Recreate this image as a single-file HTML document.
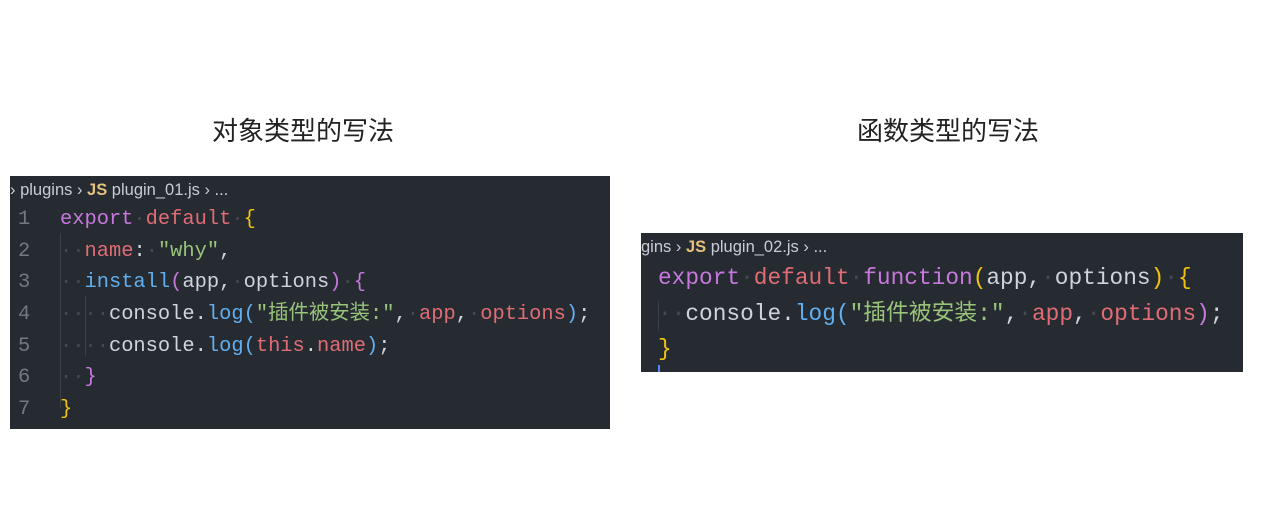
<!DOCTYPE html>
<html><head><meta charset="utf-8"><style>
body{margin:0;width:1287px;height:532px;background:#fff;position:relative;overflow:hidden;font-family:"Liberation Sans","Noto Sans CJK SC",sans-serif}
.t{position:absolute;top:113px;font-size:26px;color:#222;width:400px;text-align:center;line-height:36px}
.p{position:absolute;background:#262a31;overflow:hidden}
.bc{position:absolute;font-size:16.5px;color:#c8ccd4;white-space:nowrap;line-height:20px}
.bc b{color:#e5c07b;font-weight:bold}
.ln{position:absolute;font-family:"Liberation Mono","Noto Sans CJK SC",monospace;white-space:pre;color:#cfd3dc;line-height:1}
.ln span{line-height:1}
.n{position:absolute;color:#737884;font-family:"Liberation Mono",monospace;line-height:1}
.k{color:#c678dd}.r{color:#e06c75}.y{color:#f1c40f}.b{color:#61afef}.g{color:#98c379}.m{color:#c678dd}.d{color:#454a53}
</style></head><body>
<div class="t" style="left:103px">对象类型的写法</div>
<div class="t" style="left:748px">函数类型的写法</div>

<div class="p" style="left:10px;top:176px;width:600px;height:253px">
<div class="bc" style="left:0;top:4px">› plugins › <b>JS</b> plugin_01.js › ...</div>
<div style="position:absolute;left:50px;top:57px;width:1px;height:175px;background:#3b4048"></div>
<div style="position:absolute;left:75px;top:120px;width:1px;height:60px;background:#3b4048"></div>
<div style="font-size:20.4px">
<div class="n" style="left:8px;top:34px">1</div>
<div class="n" style="left:8px;top:66px">2</div>
<div class="n" style="left:8px;top:97px">3</div>
<div class="n" style="left:8px;top:129px">4</div>
<div class="n" style="left:8px;top:161px">5</div>
<div class="n" style="left:8px;top:192px">6</div>
<div class="n" style="left:8px;top:224px">7</div>
<div class="ln" style="left:50px;top:34px"><span class="k">export</span><span class="d">·</span><span class="r">default</span><span class="d">·</span><span class="y">{</span></div>
<div class="ln" style="left:50px;top:66px"><span class="d">··</span><span class="r">name</span>:<span class="d">·</span><span class="g">"why"</span>,</div>
<div class="ln" style="left:50px;top:97px"><span class="d">··</span><span class="b">install</span><span class="m">(</span>app,<span class="d">·</span>options<span class="m">)</span><span class="d">·</span><span class="m">{</span></div>
<div class="ln" style="left:50px;top:129px"><span class="d">····</span>console.<span class="b">log</span><span class="b">(</span><span class="g">"插件被安装:"</span>,<span class="d">·</span><span class="r">app</span>,<span class="d">·</span><span class="r">options</span><span class="b">)</span>;</div>
<div class="ln" style="left:50px;top:161px"><span class="d">····</span>console.<span class="b">log</span><span class="b">(</span><span class="r">this</span>.<span class="r">name</span><span class="b">)</span>;</div>
<div class="ln" style="left:50px;top:192px"><span class="d">··</span><span class="m">}</span></div>
<div class="ln" style="left:50px;top:224px"><span class="y">}</span></div>
</div></div>

<div class="p" style="left:641px;top:233px;width:602px;height:139px">
<div class="bc" style="left:0;top:4px">gins › <b>JS</b> plugin_02.js › ...</div>
<div style="position:absolute;left:17px;top:68px;width:1px;height:30px;background:#3b4048"></div>
<div style="position:absolute;left:17px;top:132px;width:2px;height:8px;background:#528bff"></div>
<div style="font-size:22.8px">
<div class="ln" style="left:17px;top:34px"><span class="k">export</span><span class="d">·</span><span class="r">default</span><span class="d">·</span><span class="k">function</span><span class="y">(</span>app,<span class="d">·</span>options<span class="y">)</span><span class="d">·</span><span class="y">{</span></div>
<div class="ln" style="left:17px;top:70px"><span class="d">··</span>console.<span class="b">log</span><span class="b">(</span><span class="g">"插件被安装:"</span>,<span class="d">·</span><span class="r">app</span>,<span class="d">·</span><span class="r">options</span><span class="m">)</span>;</div>
<div class="ln" style="left:17px;top:105px"><span class="y">}</span></div>
</div></div>
</body></html>
